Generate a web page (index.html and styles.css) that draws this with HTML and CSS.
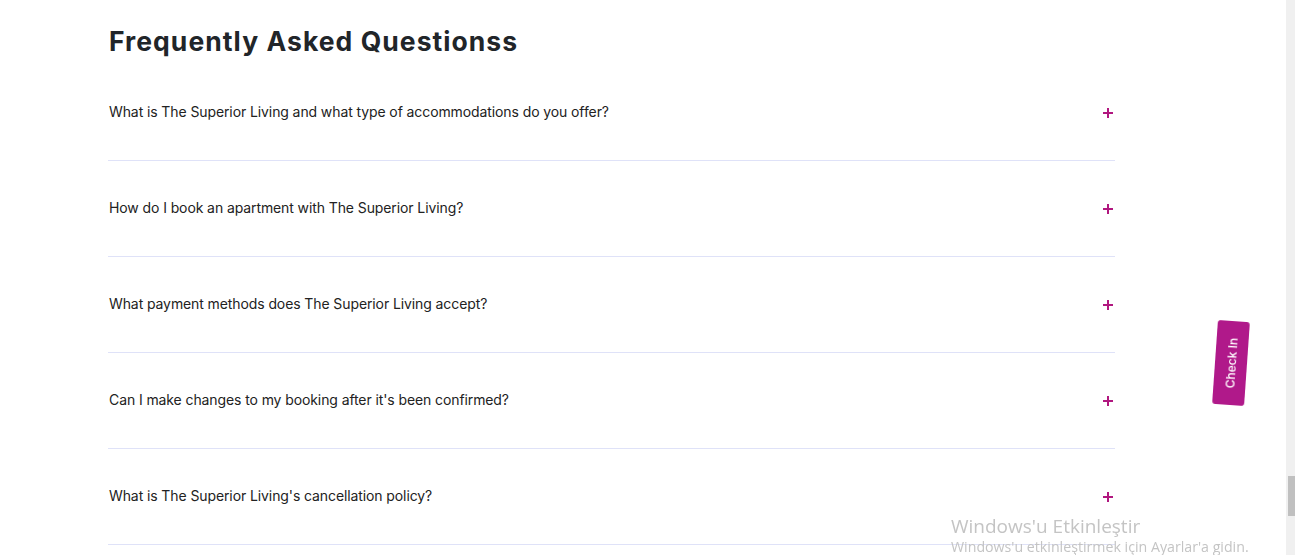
FILE: index.html
```html
<!DOCTYPE html>
<html lang="en">
<head>
<meta charset="utf-8">
<title>FAQ</title>
<link rel="stylesheet" href="styles.css">
</head>
<body>
<main class="faq">
  <h2 class="faq-title">Frequently Asked Questionss</h2>
  <ul class="faq-list">
    <li class="faq-item"><span class="faq-q">What is The Superior Living and what type of accommodations do you offer?</span><span class="faq-plus"></span></li>
    <li class="faq-item"><span class="faq-q">How do I book an apartment with The Superior Living?</span><span class="faq-plus"></span></li>
    <li class="faq-item"><span class="faq-q">What payment methods does The Superior Living accept?</span><span class="faq-plus"></span></li>
    <li class="faq-item"><span class="faq-q">Can I make changes to my booking after it's been confirmed?</span><span class="faq-plus"></span></li>
    <li class="faq-item"><span class="faq-q">What is The Superior Living's cancellation policy?</span><span class="faq-plus"></span></li>
  </ul>
</main>
<a class="checkin" href="#">Check In</a>
<div class="activate">
  <div class="activate-title">Windows'u Etkinleştir</div>
  <div class="activate-sub">Windows'u etkinleştirmek için Ayarlar'a gidin.</div>
</div>
<div class="scrollbar"><div class="scroll-thumb"></div></div>
</body>
</html>
```

FILE: styles.css
```css
html, body {
  margin: 0;
  padding: 0;
  background: #ffffff;
  overflow: hidden;
  height: 555px;
}
body {
  font-family: Inter, "Liberation Sans", sans-serif;
  color: #222222;
}
.faq {
  width: 1007px;
  margin-left: 108px;
  padding-top: 23px;
}
.faq-title {
  margin: 0;
  font-size: 26.5px;
  line-height: 36px;
  font-weight: 700;
  color: #212529;
  letter-spacing: 1.05px;
  padding-left: 1px;
}
.faq-list {
  list-style: none;
  margin: 6px 0 0 0;
  padding: 0;
}
.faq-item {
  display: flex;
  align-items: center;
  justify-content: space-between;
  height: 95px;
  border-bottom: 1px solid #dfe2f8;
  padding-left: 1px;
}
.faq-q {
  font-size: 14px;
  line-height: 18px;
  color: #222222;
  letter-spacing: -0.1px;
  margin-top: -2px;
}
.faq-plus {
  position: relative;
  width: 10px;
  height: 10px;
  margin-right: 2px;
}
.faq-plus::before,
.faq-plus::after {
  content: "";
  position: absolute;
  background: #b1177f;
}
.faq-plus::before {
  left: 0;
  top: 4px;
  width: 10px;
  height: 2px;
}
.faq-plus::after {
  left: 4px;
  top: 0;
  width: 2px;
  height: 10px;
}
.checkin {
  position: fixed;
  left: 1189px;
  top: 347px;
  width: 84px;
  height: 32px;
  background: #b0198a;
  color: #ffffff;
  font-size: 12px;
  font-weight: 500;
  text-decoration: none;
  display: flex;
  align-items: center;
  justify-content: center;
  border-radius: 3px;
  transform: rotate(-86deg);
}
.activate {
  position: fixed;
  left: 951px;
  top: 514px;
  font-family: "Open Sans", "DejaVu Sans", sans-serif;
  color: #c4c4c4;
  white-space: nowrap;
}
.activate-title {
  font-size: 19px;
  line-height: 24px;
}
.activate-sub {
  font-size: 14.2px;
  line-height: 18px;
}
.scrollbar {
  position: fixed;
  left: 1286px;
  top: 0;
  width: 9px;
  height: 555px;
  background: #f0f0f0;
}
.scroll-thumb {
  position: absolute;
  left: 2px;
  top: 476px;
  width: 7px;
  height: 40px;
  background: #c0c0c0;
}
```
